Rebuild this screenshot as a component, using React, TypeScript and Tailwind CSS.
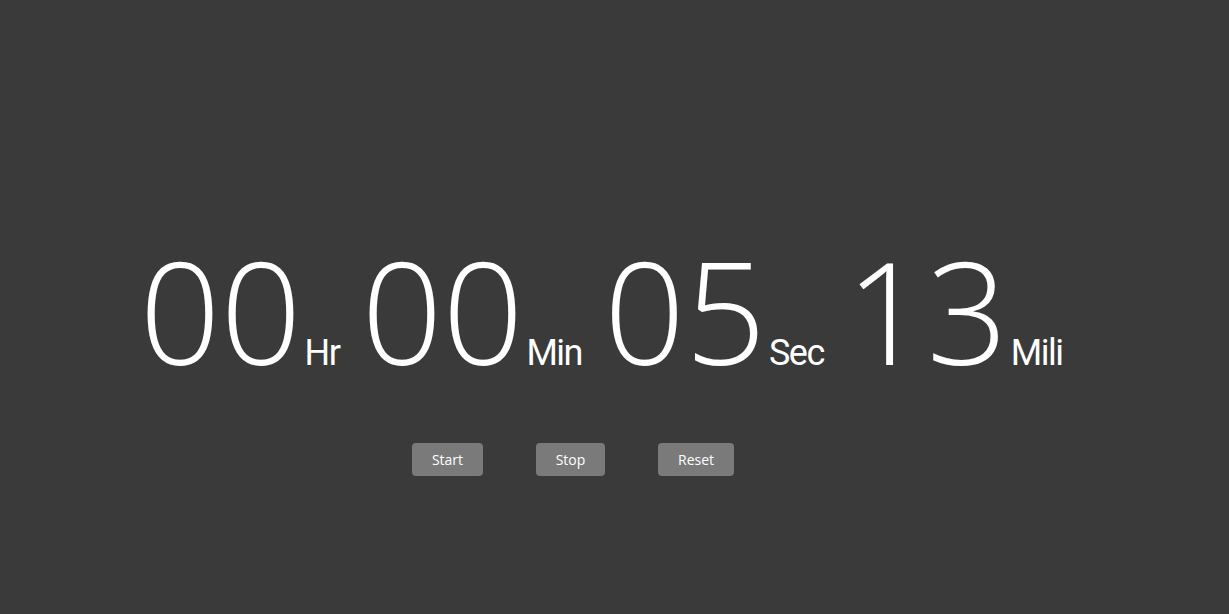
const units = [
  { value: '00', label: 'Hr' },
  { value: '00', label: 'Min' },
  { value: '05', label: 'Sec' },
  { value: '13', label: 'Mili' },
];

export default function App() {
  return (
    <div
      className="w-full h-[614px] bg-[#3a3a3a] text-white flex flex-col"
      style={{ fontFamily: '"Open Sans", "Noto Sans", sans-serif' }}
    >
      <div className="flex justify-center pr-[27px] pt-[239px]">
        {units.map((u, i) => (
          <div key={i} className={`flex items-baseline ${i > 0 ? 'ml-[22px]' : ''}`}>
            <span className="w-[160px] text-center text-[142px] font-light leading-none tracking-[0px]">
              {u.value}
            </span>
            <span
              className="ml-[5px] text-[36px] font-normal leading-none tracking-[-1.5px]"
              style={{ fontFamily: 'Roboto, "Open Sans", sans-serif' }}
            >
              {u.label}
            </span>
          </div>
        ))}
      </div>

      <div className="flex justify-center pr-[83px] mt-[62px] gap-[53px]">
        <button className="h-[33px] w-[71px] rounded-[4px] bg-[#7a7a7a] text-[14px] text-white">Start</button>
        <button className="h-[33px] w-[69px] rounded-[4px] bg-[#7a7a7a] text-[14px] text-white">Stop</button>
        <button className="h-[33px] w-[76px] rounded-[4px] bg-[#7a7a7a] text-[14px] text-white">Reset</button>
      </div>
    </div>
  );
}
